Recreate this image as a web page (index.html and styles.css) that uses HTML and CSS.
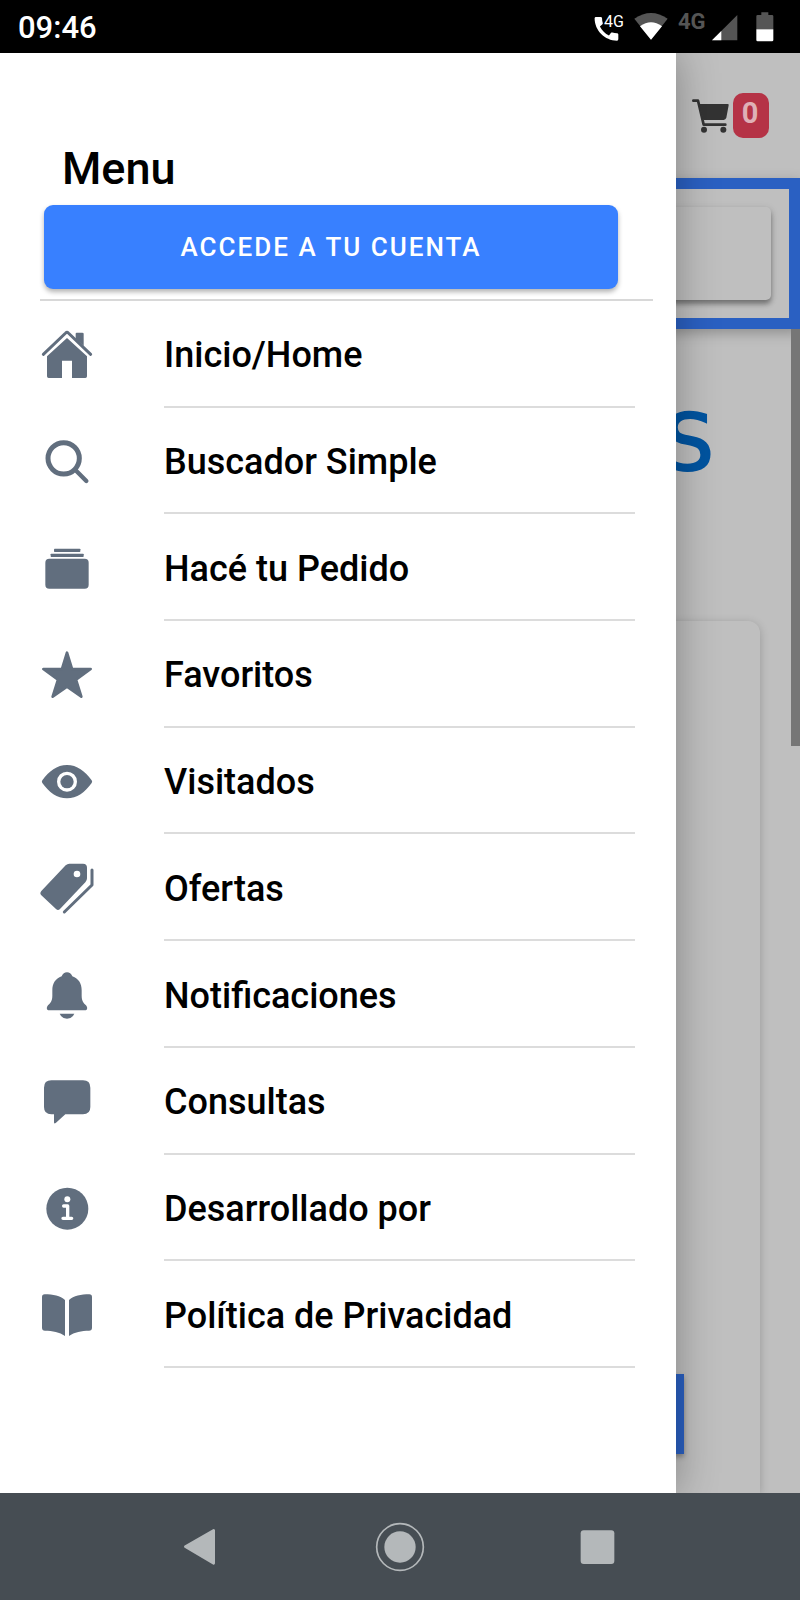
FILE: index.html
```html
<!DOCTYPE html>
<html lang="es">
<head>
<meta charset="utf-8">
<meta name="viewport" content="width=device-width, initial-scale=1">
<title>Menu</title>
<link rel="stylesheet" href="styles.css">
</head>
<body>
<header class="status">
  <time class="clock">09:46</time>
  <div class="indicators">
    <svg width="33" height="30" viewBox="0 0 99 90" aria-hidden="true">
      <path fill="#fff" transform="translate(-10 3) scale(3.95)" d="M20.01 15.38c-1.23 0-2.42-.2-3.53-.56-.35-.12-.74-.03-1.01.24l-1.57 1.97c-2.83-1.35-5.48-3.9-6.89-6.83l1.95-1.66c.27-.28.35-.67.24-1.02-.37-1.11-.56-2.3-.56-3.53 0-.54-.45-.99-.99-.99H4.19C3.65 3 3 3.24 3 3.99 3 13.28 10.73 21 20.01 21c.71 0 .99-.63.99-1.18v-3.45c0-.54-.45-.99-.99-.99z"/>
      <text class="call-net" x="30" y="46">4G</text>
    </svg>
    <svg class="wifi" width="34" height="30" viewBox="0 0 102 90" aria-hidden="true">
      <path fill="#555" d="M1 20Q51-14 101 20L51 83Z"/>
      <path fill="#fff" d="M18 43Q51 19 84 43L51 83Z"/>
    </svg>
    <span class="net">4G</span>
    <svg width="26" height="30" viewBox="0 0 78 90" aria-hidden="true">
      <path fill="#555" d="M76 9V85H0Z"/>
      <path fill="#fff" d="M28 57V85H0Z"/>
    </svg>
    <svg class="battery" width="18" height="30" viewBox="0 0 54 90" aria-hidden="true">
      <path fill="#555" d="M16 1H37V9H48Q52 9 52 13V52H1V13Q1 9 5 9H16Z"/>
      <path fill="#fff" d="M1 52H52V84Q52 88 48 88H5Q1 88 1 84Z"/>
    </svg>
  </div>
</header>

<div class="app">
  <main class="page">
    <div class="toolbar">
      <svg width="37" height="34" viewBox="0 0 111 102" aria-hidden="true">
        <path fill="none" stroke="#333" stroke-width="8" stroke-linejoin="round" stroke-linecap="round" d="M4 5H18L35 77H100"/>
        <path fill="#333" d="M22 15H107Q111 15 110 19L103 56Q101 62 95 63H34Z"/>
        <circle cx="36" cy="92" r="9" fill="#333"/><circle cx="94" cy="92" r="9" fill="#333"/>
      </svg>
      <span class="badge">0</span>
    </div>
    <div class="search-frame"><div class="search-box"></div></div>
    <div class="content">
      <div class="logo">S</div>
      <div class="card"><div class="card-action"></div></div>
      <div class="scroll-thumb"></div>
    </div>
  </main>

  <aside class="drawer">
    <h1 class="title">Menu</h1>
    <button class="login" type="button">ACCEDE A TU CUENTA</button>
    <nav class="menu">
      <a class="item" href="#"><svg class="icon" viewBox="0 0 180 180" aria-hidden="true"><path d="M90 42L150 97V157Q150 162 145 162H105V110H75V162H35Q30 162 30 157V97Z"/><path d="M116 29Q116 26 119 26H136Q140 26 140 29V66L116 44Z"/><path class="line" stroke-width="9" d="M19 91L86 27Q90 23 94 27L161 91"/></svg><span class="label">Inicio/Home</span></a>
      <a class="item" href="#"><svg class="icon" viewBox="0 0 180 180" aria-hidden="true"><circle class="line" stroke-width="15" cx="80" cy="82" r="47"/><path class="line" stroke-width="13" d="M116 118L148 150"/></svg><span class="label">Buscador Simple</span></a>
      <a class="item" href="#"><svg class="icon" viewBox="0 0 180 180" aria-hidden="true"><rect x="51" y="32" width="79" height="10" rx="2"/><rect x="41" y="47" width="99" height="10" rx="2"/><rect x="25" y="62" width="130" height="90" rx="12"/></svg><span class="label">Hacé tu Pedido</span></a>
      <a class="item" href="#"><svg class="icon" viewBox="0 0 180 180" aria-hidden="true"><path class="joined" d="M90 26L105 75H161L117 107L133 158L90 128L47 158L63 107L19 75H75Z"/></svg><span class="label">Favoritos</span></a>
      <a class="item" href="#"><svg class="icon" viewBox="0 0 180 180" aria-hidden="true"><path fill-rule="evenodd" d="M16 88C36 60 60 42 90 42S144 60 164 88Q167 92 164 96C144 124 120 142 90 142S36 124 16 96Q13 92 16 88ZM60 92A30 30 0 1 0 120 92A30 30 0 1 0 60 92Z"/><circle cx="90" cy="92" r="20"/></svg><span class="label">Visitados</span></a>
      <a class="item" href="#"><svg class="icon" viewBox="0 0 180 180" aria-hidden="true"><path fill-rule="evenodd" d="M97 17H138Q150 17 150 29V61Q150 68 145 73L69 153Q63 159 57 153L13 112Q7 106 13 99L86 22Q91 17 97 17ZM110 48A10 10 0 1 0 130 48A10 10 0 1 0 110 48Z"/><path class="line" stroke-width="9" d="M165 36V81L82 162"/></svg><span class="label">Ofertas</span></a>
      <a class="item" href="#"><svg class="icon" viewBox="0 0 180 180" aria-hidden="true"><path d="M90 22Q101 22 106 34C125 41 134 56 134 76V92C134 108 140 114 147 121Q153 129 149 134Q147 136 142 136H38Q33 136 31 134Q27 129 33 121C40 114 46 108 46 92V76C46 56 55 41 74 34Q79 22 90 22Z"/><path d="M68 146H112Q106 161 90 161T68 146Z"/></svg><span class="label">Notificaciones</span></a>
      <a class="item" href="#"><svg class="icon" viewBox="0 0 180 180" aria-hidden="true"><path d="M43 28H138Q160 28 160 50V108Q160 130 138 130H85L57 155Q51 160 51 154V130H43Q21 130 21 108V50Q21 28 43 28Z"/></svg><span class="label">Consultas</span></a>
      <a class="item" href="#"><svg class="icon" viewBox="0 0 180 180" aria-hidden="true"><circle cx="91" cy="92" r="63"/><circle cx="91" cy="64" r="9" fill="#fff"/><path fill="none" stroke="#fff" stroke-width="10" stroke-linecap="round" stroke-linejoin="round" d="M80 84H92V121M78 121H104"/></svg><span class="label">Desarrollado por</span></a>
      <a class="item" href="#"><svg class="icon" viewBox="0 0 180 180" aria-hidden="true"><path d="M15 36Q15 28 23 28C48 28 70 33 84 45V153C68 141 46 137 24 137Q15 137 15 128Z"/><path d="M165 36Q165 28 157 28C132 28 110 33 96 45V153C112 141 134 137 156 137Q165 137 165 128Z"/></svg><span class="label">Política de Privacidad</span></a>
    </nav>
  </aside>
</div>

<footer class="navbar">
  <button class="nav-key" type="button" aria-label="Atrás"><svg width="50" height="50" viewBox="0 0 150 150"><path fill="#b4b8ba" stroke="#b4b8ba" stroke-width="8" stroke-linejoin="round" d="M31 74L116 25V124Z"/></svg></button>
  <button class="nav-key" type="button" aria-label="Inicio"><svg width="50" height="50" viewBox="0 0 150 150"><circle cx="75" cy="75" r="70" fill="none" stroke="#b4b8ba" stroke-width="5"/><circle cx="75" cy="75" r="47" fill="#b4b8ba"/></svg></button>
  <button class="nav-key" type="button" aria-label="Recientes"><svg width="50" height="50" viewBox="0 0 150 150"><rect x="17" y="25" width="101" height="101" rx="9" fill="#b4b8ba"/></svg></button>
</footer>
</body>
</html>
```

FILE: styles.css
```css
* {
  box-sizing: border-box;
}

body {
  margin: 0;
  min-height: 100vh;
  display: flex;
  flex-direction: column;
  font-family: Roboto, "Noto Sans", sans-serif;
  background: #bfbfbf;
  color: #000;
}

svg {
  display: block;
  flex: none;
}

/* System status bar */
.status {
  display: flex;
  align-items: center;
  justify-content: space-between;
  height: 53px;
  padding: 0 26px 0 18px;
  background: #000;
  color: #fff;
}

.clock {
  padding-top: 2px;
  font-size: 31px;
  font-weight: 500;
  line-height: 36px;
}

.indicators {
  display: flex;
}

.wifi {
  margin-left: 7px;
}

.net {
  width: 34px;
  margin-left: 10px;
  color: #555;
  font-size: 22px;
  font-weight: 700;
  line-height: 20px;
}

.battery {
  margin-left: 18px;
}

.call-net {
  font-size: 48px;
  fill: #fff;
}

/* Drawer and page share one cell, the drawer lies on top */
.app {
  flex: 1;
  display: grid;
  grid-template-columns: 100%;
  overflow: hidden;
}

.page,
.drawer {
  grid-area: 1 / 1;
}

.page {
  display: flex;
  flex-direction: column;
}

.toolbar {
  display: flex;
  align-items: center;
  justify-content: flex-end;
  gap: 4px;
  height: 125px;
  padding-right: 31px;
}

.badge {
  width: 36px;
  padding: 0 2px 4px 0;
  border-radius: 10px;
  background: #b53346;
  color: #dfb0b6;
  font-size: 29px;
  font-weight: 700;
  line-height: 41px;
  text-align: center;
}

.search-frame {
  height: 151px;
  padding: 18px;
  border: 11px solid #2a60c2;
  box-shadow: 0 4px 12px rgba(0, 0, 0, 0.25);
}

.search-box {
  height: 93px;
  border-radius: 5px;
  box-shadow: 0 4px 5px rgba(0, 0, 0, 0.35), 0 2px 8px rgba(0, 0, 0, 0.12);
}

.content {
  position: relative;
  flex: 1;
  display: flex;
  flex-direction: column;
  padding-right: 40px;
}

.logo {
  height: 292px;
  padding: 64px 46px 0 0;
  color: #0054a0;
  font-family: "DejaVu Sans", sans-serif;
  font-size: 79px;
  line-height: 100px;
  text-align: right;
  -webkit-text-stroke: 2px #0054a0;
}

.card {
  flex: 1;
  display: flex;
  align-items: flex-end;
  padding: 0 76px 39px 0;
  border-radius: 0 12px 0 0;
  box-shadow: 0 2px 10px rgba(0, 0, 0, 0.2);
}

.card-action {
  flex: 1;
  height: 80px;
  background: #2a60c2;
  box-shadow: 0 3px 5px rgba(0, 0, 0, 0.3);
}

.scroll-thumb {
  position: absolute;
  top: 0;
  right: 0;
  width: 9px;
  height: 417px;
  background: #767676;
}

/* Side menu */
.drawer {
  z-index: 1;
  width: 84.5%;
  display: flex;
  flex-direction: column;
  padding: 90px 0 125px;
  background: #fff;
  box-shadow: 0 0 40px rgba(0, 0, 0, 0.32);
}

.title {
  margin: 0 0 10px;
  padding-left: 62px;
  font-size: 45px;
  font-weight: 500;
  line-height: 52px;
}

.login {
  height: 84px;
  margin: 0 58px 10px 44px;
  border: 0;
  border-radius: 9px;
  background: #3880ff;
  box-shadow: 0 3px 5px rgba(0, 0, 0, 0.3);
  color: #fff;
  font-family: inherit;
  font-size: 26px;
  font-weight: 500;
  letter-spacing: 2px;
}

.menu {
  flex: 1;
  display: grid;
  grid-template-rows: 2px;
  grid-auto-rows: 1fr;
  padding: 0 41px 0 37px;
}

.menu::before {
  content: "";
  margin: 0 -18px 0 3px;
  background: #d8d8d8;
}

.item {
  display: flex;
  align-items: center;
  gap: 67px;
  color: inherit;
  text-decoration: none;
}

.icon {
  width: 60px;
  height: 60px;
  fill: #616e7e;
}

.line {
  fill: none;
  stroke: #616e7e;
  stroke-linecap: round;
  stroke-linejoin: round;
}

.joined {
  stroke: #616e7e;
  stroke-width: 8px;
  stroke-linejoin: round;
}

.label {
  flex: 1;
  align-self: stretch;
  display: flex;
  align-items: center;
  padding-top: 4px;
  border-bottom: 2px solid #dcdcdc;
  font-size: 36px;
  font-weight: 500;
}

/* System navigation bar */
.navbar {
  display: grid;
  grid-template-columns: repeat(3, 1fr);
  height: 107px;
  padding: 0 12.5%;
  background: #464d53;
}

.nav-key {
  display: flex;
  align-items: center;
  justify-content: center;
  padding: 0;
  border: 0;
  background: none;
}
```
